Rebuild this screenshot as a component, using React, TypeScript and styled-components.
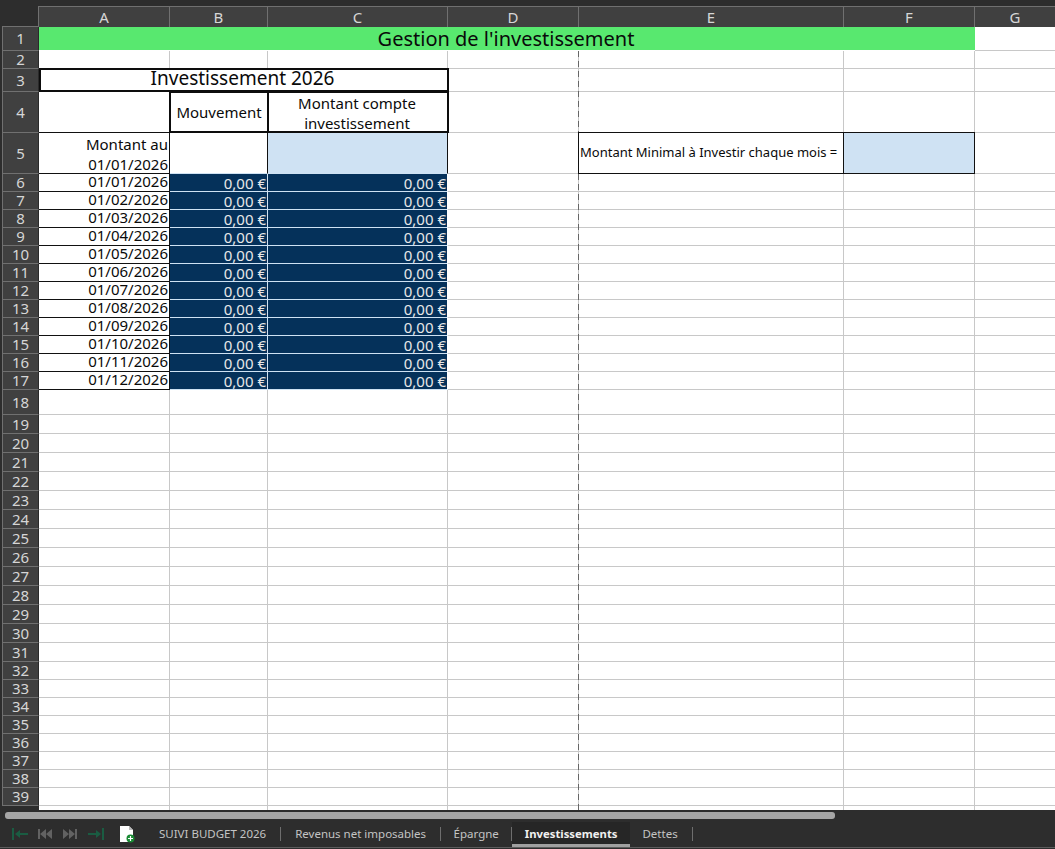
import React from 'react';
import styled, { createGlobalStyle } from 'styled-components';

const COLUMNS = [
  { label: 'A', width: 131 },
  { label: 'B', width: 98 },
  { label: 'C', width: 180 },
  { label: 'D', width: 131 },
  { label: 'E', width: 265 },
  { label: 'F', width: 131 },
  { label: 'G', width: 81 },
];

const rowHeight = (n: number) => {
  if (n === 1) return 24;
  if (n === 3) return 23;
  if (n === 4 || n === 5) return 41;
  if (n === 18) return 25;
  if (n >= 19 && n <= 31) return 19;
  return 18;
};

const ROWS = Array.from({ length: 39 }, (_, i) => i + 1);
const MONTHS = ['01', '02', '03', '04', '05', '06', '07', '08', '09', '10', '11', '12'];
const TABS = ['SUIVI BUDGET 2026', 'Revenus net imposables', 'Épargne', 'Investissements', 'Dettes'];
const ACTIVE_TAB = 'Investissements';

const GlobalStyle = createGlobalStyle`
  html, body { margin: 0; padding: 0; background: #2d2d2d; overflow: hidden; }
`;

const Window = styled.div`
  width: 1055px;
  height: 849px;
  background: #2d2d2d;
  display: flex;
  flex-direction: column;
  overflow: hidden;
  font-family: "Noto Sans", sans-serif;
`;

const Sheet = styled.div`
  position: relative;
  margin: 6px 0 0 2px;
  height: 804px;
  flex: none;
  display: grid;
  grid-template-columns: 37px ${COLUMNS.map(c => `${c.width}px`).join(' ')};
  grid-template-rows: 21px ${ROWS.map(n => `${rowHeight(n)}px`).join(' ')} 5px;
  overflow: hidden;
`;

const Corner = styled.div`
  box-sizing: border-box;
  background: #2d2d2d;
  border-bottom: 1px solid #707070;
  border-right: 1px solid #707070;
`;

const HeaderCell = styled.div`
  box-sizing: border-box;
  background: #404040;
  border: 1px solid #707070;
  border-left-width: 0;
  color: #d6d6d6;
  font-size: 15px;
  display: flex;
  align-items: center;
  justify-content: center;
`;

const ColumnHeader = styled(HeaderCell)`
  border-bottom-width: 0;
`;

const RowHeader = styled(HeaderCell)`
  border-left-width: 1px;
  border-top-width: 0;
  border-right-color: #2a2a2a;
  padding-bottom: 1px;
  grid-column: 1;
`;

const Gutter = styled.div`
  background: #2d2d2d;
`;

const Blank = styled.div`
  box-sizing: border-box;
  background: #fff;
  border-right: 1px solid #c8c8c8;
  border-bottom: 1px solid #c8c8c8;
`;

const Banner = styled.div`
  box-sizing: border-box;
  grid-column: span 6;
  background: #58e86f;
  border-bottom: 1px solid #fff;
  padding-right: 2px;
  color: #0a0a0a;
  font-size: 20px;
  line-height: 24px;
  text-align: center;
`;

const ThickBox = styled.div<{ $span?: number }>`
  position: relative;
  box-sizing: border-box;
  background: #fff;
  grid-column: span ${p => p.$span ?? 1};
  color: #0a0a0a;
  display: flex;
  align-items: center;
  justify-content: center;
  text-align: center;
  &::after {
    content: '';
    position: absolute;
    inset: -1px -1px 0 -1px;
    border: 2px solid #0d0d0d;
    pointer-events: none;
    z-index: 2;
  }
`;

const SheetTitle = styled(ThickBox)`
  font-size: 19px;
  padding: 0 2px 5px 0;
  &::after { left: 0; }
`;

const ColumnTitle = styled(ThickBox)`
  font-size: 15px;
  line-height: 20px;
  padding-right: 2px;
`;

const MoveTitle = styled(ColumnTitle)`
  padding: 0 0 2px;
`;

const DateCell = styled.div`
  box-sizing: border-box;
  background: #fff;
  border-right: 1px solid #111;
  border-bottom: 1px solid #111;
  padding-right: 1px;
  color: #0a0a0a;
  font-size: 15px;
  line-height: 14px;
  text-align: right;
  white-space: nowrap;
`;

const OpeningLabel = styled(DateCell)`
  line-height: 20px;
  padding-top: 1px;
  border-top: 1px solid #111;
  margin-top: -1px;
`;

const OpeningMove = styled.div`
  position: relative;
  background: #fff;
  box-sizing: border-box;
  border-right: 1px solid #111;
  border-bottom: 1px solid #cfe2f3;
`;

const BlueInput = styled.div<{ $top?: boolean }>`
  box-sizing: border-box;
  background: #cfe2f3;
  border-right: 1px solid #111;
  border-bottom: 1px solid ${p => (p.$top ? '#111' : '#cfe2f3')};
  ${p => p.$top && 'border-top: 1px solid #111; margin-top: -1px;'}
`;

const AmountCell = styled.div<{ $last?: boolean }>`
  box-sizing: border-box;
  background: #05315a;
  border-right: 1px solid ${p => (p.$last ? '#fff' : '#cfe2f3')};
  border-bottom: 1px solid #cfe2f3;
  padding-right: 1px;
  color: #e8e8e8;
  font-size: 15px;
  line-height: 19px;
  text-align: right;
  white-space: nowrap;
`;

const MinimumLabel = styled.div`
  box-sizing: border-box;
  background: #fff;
  margin: -1px 0 0 -1px;
  border: 1px solid #111;
  color: #0a0a0a;
  font-size: 13px;
  line-height: 39px;
  padding-left: 1px;
  white-space: nowrap;
  overflow: hidden;
`;

const PageBreak = styled.div<{ $top: number; $height: number }>`
  position: absolute;
  left: 576px;
  top: ${p => p.$top}px;
  height: ${p => p.$height}px;
  width: 1px;
  z-index: 1;
  background: repeating-linear-gradient(to bottom, #666 0 6px, transparent 6px 10px);
`;

const ScrollTrack = styled.div`
  height: 12px;
  flex: none;
  padding: 2px 0 0 5px;
  box-sizing: border-box;
`;

const ScrollThumb = styled.div`
  width: 830px;
  height: 7px;
  border-radius: 3px;
  background: #a6a6a6;
`;

const TabBar = styled.div`
  height: 25px;
  flex: none;
  display: flex;
  align-items: stretch;
  border-bottom: 1px solid #5c5c5c;
`;

const NavIcons = styled.svg`
  width: 159px;
  height: 25px;
  flex: none;
  margin-right: -14px;
`;

const Tab = styled.div<{ $active?: boolean; $tight?: boolean }>`
  box-sizing: border-box;
  padding: 0 ${p => (p.$tight ? '12.5px' : '14px')};
  display: flex;
  align-items: center;
  height: 25px;
  color: ${p => (p.$active ? '#f0f0f0' : '#c4c4c4')};
  font-size: ${p => (p.$active ? '11.3px' : '11.5px')};
  font-weight: ${p => (p.$active ? 700 : 400)};
  background: ${p => (p.$active ? '#262626' : 'transparent')};
  border-bottom: 3px solid ${p => (p.$active ? '#a0a0a0' : 'transparent')};
  white-space: nowrap;
`;

const TabDivider = styled.div`
  width: 1px;
  height: 14px;
  margin-top: 5px;
  background: #6e6e6e;
  flex: none;
  &:last-child { margin-left: 2px; }
`;

const blanks = (count: number, prefix: string) =>
  Array.from({ length: count }, (_, i) => <Blank key={`${prefix}-${i}`} />);

const renderRow = (n: number) => {
  if (n === 1) return [<Banner key="title">Gestion de l'investissement</Banner>, <Blank key="g1" />];
  if (n === 3)
    return [
      <SheetTitle key="title3" $span={3}>Investissement 2026</SheetTitle>,
      ...blanks(4, 'r3'),
    ];
  if (n === 4)
    return [
      <Blank key="a4" />,
      <MoveTitle key="b4">Mouvement</MoveTitle>,
      <ColumnTitle key="c4">Montant compte investissement</ColumnTitle>,
      ...blanks(4, 'r4'),
    ];
  if (n === 5)
    return [
      <OpeningLabel key="a5">Montant au<br />01/01/2026</OpeningLabel>,
      <OpeningMove key="b5" />,
      <BlueInput key="c5" />,
      <Blank key="d5" />,
      <MinimumLabel key="e5">Montant Minimal à Investir chaque mois =</MinimumLabel>,
      <BlueInput key="f5" $top />,
      <Blank key="g5" />,
    ];
  if (n >= 6 && n <= 17)
    return [
      <DateCell key="date">01/{MONTHS[n - 6]}/2026</DateCell>,
      <AmountCell key="move">0,00 €</AmountCell>,
      <AmountCell key="total" $last>0,00 €</AmountCell>,
      ...blanks(4, `r${n}`),
    ];
  return blanks(7, `r${n}`);
};

const App = () => {
  return (
    <Window>
      <GlobalStyle />
      <Sheet>
        <Corner />
        {COLUMNS.map(c => <ColumnHeader key={c.label}>{c.label}</ColumnHeader>)}
        {ROWS.map(n => (
          <React.Fragment key={n}>
            <RowHeader>{n}</RowHeader>
            {renderRow(n)}
          </React.Fragment>
        ))}
        <Gutter />
        {blanks(7, 'tail')}
        <PageBreak $top={45} $height={81} />
        <PageBreak $top={168} $height={636} />
      </Sheet>
      <ScrollTrack><ScrollThumb /></ScrollTrack>
      <TabBar>
        <NavIcons viewBox="0 0 159 25">
          <g fill="#1a5c42">
            <rect x="12" y="6" width="2" height="12" />
            <path d="M15 12 l5 -4 v3 h8 v2 h-8 v3 z" />
            <path d="M102 6 h2 v12 h-2 z" />
            <path d="M101 12 l-5 -4 v3 h-8 v2 h8 v3 z" />
          </g>
          <g fill="#626262">
            <rect x="38" y="7" width="2" height="10" />
            <path d="M40 12 l6 -5 v10 z M46 12 l6 -5 v10 z" />
            <rect x="75" y="7" width="2" height="10" />
            <path d="M75 12 l-6 -5 v10 z M69 12 l-6 -5 v10 z" />
          </g>
          <path d="M120 4 h9 l4 4 v12 h-13 z" fill="#fff" />
          <path d="M129 4 v4 h4" fill="#bbb" />
          <circle cx="130.500" cy="16.500" r="4" fill="#1a8a34" />
          <path d="M128 16.500 h5 M130.500 14 v5" stroke="#fff" strokeWidth="1.2" />
        </NavIcons>
        {TABS.map((t, i) => (
          <React.Fragment key={t}>
            <Tab $active={t === ACTIVE_TAB} $tight={i >= 2}>{t}</Tab>
            {t !== ACTIVE_TAB && <TabDivider />}
          </React.Fragment>
        ))}
      </TabBar>
    </Window>
  );
};

export default App;
